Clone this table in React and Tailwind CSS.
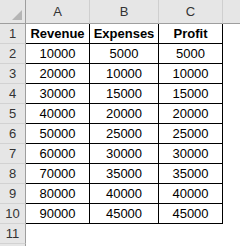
const rows = [
  ["Revenue", "Expenses", "Profit"],
  ["10000", "5000", "5000"],
  ["20000", "10000", "10000"],
  ["30000", "15000", "15000"],
  ["40000", "20000", "20000"],
  ["50000", "25000", "25000"],
  ["60000", "30000", "30000"],
  ["70000", "35000", "35000"],
  ["80000", "40000", "40000"],
  ["90000", "45000", "45000"],
];

export default function App() {
  return (
    <div
      className="w-[240px] h-[246px] overflow-hidden bg-white text-[13px] text-black"
      style={{ fontFamily: '"Liberation Sans", Arial, sans-serif' }}
    >
      <div className="grid grid-cols-[26px_64px_69px_64px_1fr] grid-rows-[24px_repeat(12,20px)]">
        {/* corner */}
        <div className="relative bg-[#e6e6e6] border-r border-b border-[#9e9e9e]">
          <div className="absolute right-[3px] bottom-[3px] w-0 h-0 border-l-[10px] border-l-transparent border-b-[10px] border-b-[#b5b5b5]" />
        </div>
        {["A", "B", "C"].map((c) => (
          <div
            key={c}
            className="flex items-center justify-center bg-[#e6e6e6] border-r border-r-[#cfcfcf] border-b border-b-[#9e9e9e] text-[#333]"
          >
            {c}
          </div>
        ))}
        <div className="bg-[#e6e6e6] border-b border-[#9e9e9e]" />

        {rows.map((r, i) => (
          <div key={i} className="contents">
            <div className="flex items-center justify-center bg-[#e6e6e6] border-r border-r-[#9e9e9e] border-b border-b-[#d2d2d2] text-[#333]">
              {i + 1}
            </div>
            {r.map((v, j) => (
              <div
                key={j}
                className={`flex items-center justify-center border-r border-b border-black ${
                  i === 0 ? "font-bold" : ""
                }`}
              >
                {v}
              </div>
            ))}
            <div />
          </div>
        ))}

        {/* row 11 */}
        <div className="flex items-center justify-center bg-[#e6e6e6] border-r border-r-[#9e9e9e] border-b border-b-[#d2d2d2] text-[#333]">
          11
        </div>
        <div />
        <div />
        <div />
        <div />

        {/* row 12, cut off */}
        <div className="bg-[#e6e6e6] border-r border-r-[#9e9e9e]" />
        <div />
        <div />
        <div />
        <div />
      </div>
    </div>
  );
}
